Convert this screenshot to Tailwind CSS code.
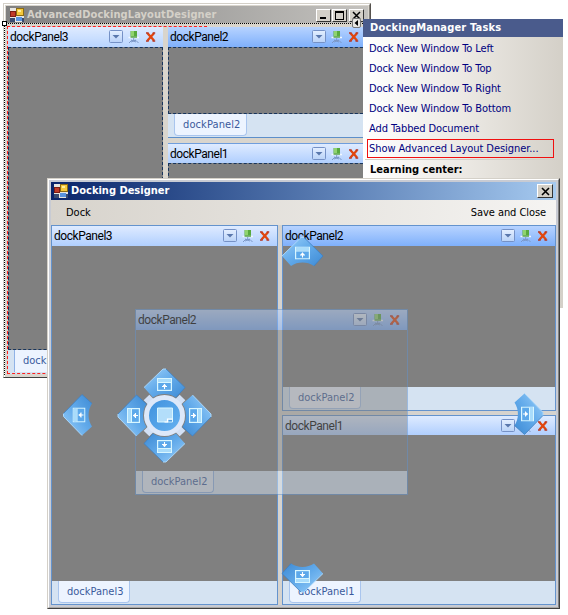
<!DOCTYPE html>
<html lang="en">
<head>
<meta charset="utf-8">
<title>Docking Designer</title>
<script src="https://cdn.jsdelivr.net/npm/@tailwindcss/browser@4"></script>
</head>
<body class="bg-white">
<svg class="absolute w-0 h-0" aria-hidden="true">
  <defs>
    <linearGradient id="blue" x1="0" y1="0" x2="1" y2="1"><stop offset="0" stop-color="#9bd0fa"/><stop offset=".5" stop-color="#62aaea"/><stop offset="1" stop-color="#3d8ad4"/></linearGradient>
    <linearGradient id="disc" x1="0" y1="0" x2="1" y2="1"><stop offset="0" stop-color="#3d8fdc"/><stop offset="1" stop-color="#68b4f2"/></linearGradient>
    <linearGradient id="btn" x1="0" y1="0" x2="0" y2="1"><stop offset="0" stop-color="#e4efff"/><stop offset="1" stop-color="#b9d2f8"/></linearGradient>
    <symbol id="app" viewBox="0 0 14 14"><rect width="14" height="14" fill="#e8e6e0"/><rect x=".5" y="3.500" width="5" height="5" fill="#c03a28" stroke="#7c1d14"/><rect x="6.500" y=".5" width="7" height="7" fill="#f5c83c" stroke="#8c6c14"/><rect x="8" y="2" width="3" height="2" fill="#ffef9c"/><rect x="0" y="10" width="5" height="4" fill="#394a70"/><rect x="6" y="9" width="6" height="4" fill="#5a94e0"/><rect x="12" y="10" width="2" height="4" fill="#394a70"/></symbol>
    <symbol id="caption" viewBox="0 0 48 16"><rect x=".5" y="1.500" width="13" height="12" rx="1" fill="url(#btn)" stroke="#7591c6"/><path d="M3.500 6h7L7 9.500z" fill="#5a78ad"/><path d="M21.500 2h6.500v6h-6.500z" fill="#58aa3e"/><path d="M22 2h3v5h-3z" fill="#8fd36f"/><path d="M19.500 8.500h10.500" stroke="#f2f8ff" stroke-width="1.500"/><path d="M21.500 8.200h6.500" stroke="#4a9a3c"/><path d="M24.700 9v2M20 14l2.500-2.500h4.500l2.500 2.500M22 11l5 2M27 11l-5 2" stroke="#7c98c8" fill="none"/><path d="M38.500 4.200l6.500 7.300M45 4.200l-6.500 7.300" stroke="#e0460f" stroke-width="2.300"/><path d="M37 4h2.500M43.700 4h2.500M37 12h2.700M43.500 12h2.700" stroke="#b8321c" stroke-width="1.400"/></symbol>
    <symbol id="wedge" viewBox="-24 -48 48 34"><path d="M-1.500-46.500h3L20.500-28 11.500-18A21 21 0 0 0-11.500-18L-20.500-28z" fill="url(#blue)"/><path d="M-20.500-28-1.500-46.500h3" fill="none" stroke="#a9d6fa" stroke-width="1"/><path d="M1.500-46.500 20.500-28l-9 10" fill="none" stroke="#3f80c2" stroke-width=".8"/></symbol>
    <symbol id="glyph" viewBox="0 0 15 13"><rect x=".6" y=".6" width="13.800" height="11.800" fill="#5ca8ea" stroke="#d8f6ff" stroke-width="1.200"/><path d="M1 1h13v3H1z" fill="#a9dcfb"/><path d="M1 4.500h13" stroke="#d8f6ff"/><path d="M7.500 6v5M5 8.500h5M6.200 8.200l1.300-1.500 1.300 1.500" stroke="#fff" stroke-width="1.100" fill="none"/></symbol>
    <g id="dock"><use href="#wedge" x="-24" y="-48" width="48" height="34"/><use href="#glyph" x="-7.500" y="-37.500" width="15" height="13"/></g>
  </defs>
</svg>
<main class="relative w-[568px] h-[615px] overflow-hidden bg-white text-[11px] font-['DejaVu_Sans_Condensed','DejaVu_Sans',sans-serif]">

  <!-- Form being designed -->
  <section class="absolute left-[3px] top-[3px] w-[368px] h-[375px] bg-[#d9d5cd] border border-[#d4d0c8] border-r-[#55524e] border-b-[#404040]">
    <div class="w-full h-full border-t border-l border-white border-r border-r-[#85827c] p-px flex flex-col">
      <div class="h-[17px] shrink-0 flex items-center pl-[4px] pr-[4px] bg-linear-to-r from-[#808080] to-[#c4c2be]">
        <svg class="w-[14px] h-[14px] mr-[3px]"><use href="#app"/></svg>
        <span class="grow whitespace-nowrap font-bold text-[#d4d0c8] leading-[17px] tracking-[0.08px]">AdvancedDockingLayoutDesigner</span>
        <div class="flex gap-px mt-[2px]">
          <div class="w-[15px] h-[13px] bg-[#d4d0c8] border border-white border-r-[#333] border-b-[#333] flex items-end pl-[3px] pb-[2px]"><i class="w-[6px] h-[2px] bg-black"></i></div>
          <div class="w-[15px] h-[13px] bg-[#d4d0c8] border border-white border-r-[#333] border-b-[#333] flex items-center justify-center"><i class="w-[9px] h-[9px] border border-black border-t-2"></i></div>
          <div class="w-[15px] h-[13px] ml-px bg-[#d4d0c8] border border-white border-r-[#333] border-b-[#333] flex items-center justify-center"><svg class="w-[9px] h-[9px]" viewBox="0 0 9 9"><path d="M1 1l7 7M8 1L1 8" stroke="#000" stroke-width="1.500"/></svg></div>
        </div>
      </div>
      <div class="grow flex gap-[5px] pl-[2px] pt-[4px] pb-[2px] min-h-0">
        <div class="w-[155px] shrink-0 flex flex-col">
          <div class="h-[20px] flex items-center justify-between pl-[2px] pr-[6px] bg-linear-to-b from-[#dfebff] to-[#b9d5ff]">
            <span class="font-[Roboto] text-[12px] tracking-[-0.45px]">dockPanel3</span><svg class="w-[48px] h-[16px]"><use href="#caption"/></svg>
          </div>
          <div class="grow bg-[#808080] border border-dashed border-[#17345c]"></div>
          <div class="h-[24px] bg-[#d5e3f2] flex pl-[6px] pb-[2px]"><div class="border-l border-[#8fb2e6] bg-[#edf4ff] pl-[8px] pr-[7px] leading-[22px] text-[#3b5a9c]">dockPanel3</div></div>
        </div>
        <div class="grow flex flex-col">
          <div class="h-[20px] flex items-center justify-between pl-[2px] pr-0 bg-linear-to-b from-[#b7d3ff] to-[#7fb0fb]">
            <span class="font-[Roboto] text-[12px] tracking-[-0.45px]">dockPanel2</span><svg class="w-[48px] h-[16px] mr-[8px]"><use href="#caption"/></svg>
          </div>
          <div class="h-[67px] bg-[#808080] border border-dashed border-[#17345c]"></div>
          <div class="h-[24px] bg-[#d5e3f2] border-b border-[#5d8fca] flex pl-[6px] pb-[1px]"><div class="border-x border-b rounded-b-sm border-[#a9c5ee] bg-[#edf4ff] pl-[8px] pr-[6px] leading-[22px] text-[#3b5a9c] tracking-[0.1px]">dockPanel2</div></div>
          <div class="h-[20px] mt-[5px] flex items-center justify-between pl-[2px] pr-0 border-t border-[#6f9edd] bg-linear-to-b from-[#dfebff] to-[#b0cffe]">
            <span class="font-[Roboto] text-[12px] tracking-[-0.45px]">dockPanel1</span><svg class="w-[48px] h-[16px] mr-[8px]"><use href="#caption"/></svg>
          </div>
          <div class="grow bg-[#808080] border border-dashed border-[#17345c]"></div>
        </div>
      </div>
    </div>
  </section>
  <!-- Selection marks over the form -->
  <div class="absolute left-[4px] top-[23px] w-[363px] h-[352px] border border-dotted border-black border-r-0 border-b-0"></div>
  <div class="absolute left-[7px] top-[26px] w-[200px] h-[348px] border border-dashed border-[#ff2020] border-r-0"></div>
  <div class="absolute left-[2px] top-[21px] w-[5px] h-[5px] bg-white border border-black"></div>

  <!-- Smart tag task list -->
  <section class="absolute left-[363px] top-[19px] w-[200px] h-[289px] bg-linear-to-r from-white via-[#ece9e4] to-[#d4d0c8] flex flex-col text-[#000080]">
    <h2 class="h-[18px] shrink-0 bg-[#4a5b8c] text-white font-bold leading-[18px] pl-[7px] whitespace-nowrap tracking-[0.18px]">DockingManager Tasks</h2>
    <div class="flex flex-col pt-[2px] pl-[6px] leading-[20px] whitespace-nowrap tracking-[-0.1px]">
      <a>Dock New Window To Left</a><a>Dock New Window To Top</a><a>Dock New Window To Right</a><a>Dock New Window To Bottom</a><a>Add Tabbed Document</a>
      <a class="ml-[-2px] w-[187px] h-[19px] border border-[#f01010] pl-px leading-[17px] tracking-[-0.06px]">Show Advanced Layout Designer...</a>
    </div>
    <div class="mt-px mx-[2px] border-t border-[#d4d0c8] h-px"></div>
    <h3 class="pl-[7px] text-black font-bold leading-[20px]">Learning center:</h3>
  </section>
  <div class="absolute left-[559px] top-[263px] w-px h-[19px] bg-[#777]"></div>
  <div class="absolute left-[352px] top-[18px] w-[9px] h-[10px] rounded-xs bg-[#e9e7e3] border border-[#777]"><svg class="w-full h-full" viewBox="0 0 7 8"><path d="M5 1v6L1.500 4z"/></svg></div>

  <!-- Docking Designer dialog -->
  <section class="absolute left-[47px] top-[178px] w-[513px] h-[431px] bg-[#d4d0c8] border border-[#d4d0c8] border-r-[#404040] border-b-[#404040]">
    <div class="w-full h-full border border-white border-r-[#808080] border-b-[#aaa9a6] p-[2px] bg-[#c8cbd3] flex flex-col">
      <div class="h-[18px] shrink-0 flex items-center pl-[3px] pr-[3px] bg-linear-to-r from-[#0a246a] to-[#a6caf0]">
        <svg class="w-[14px] h-[14px] mr-[3px]"><use href="#app"/></svg>
        <span class="grow font-bold text-white leading-[18px]">Docking Designer</span>
        <div class="w-[16px] h-[14px] bg-[#d4d0c8] border border-white border-r-[#333] border-b-[#333] flex items-center justify-center"><svg class="w-[9px] h-[9px]" viewBox="0 0 9 9"><path d="M1 1l7 7M8 1L1 8" stroke="#000" stroke-width="1.600"/></svg></div>
      </div>
      <div class="h-[25px] shrink-0 flex items-center justify-between pl-[15px] pr-[10px] pt-[2px] bg-linear-to-r from-[#d7d3cc] to-[#f5f4f2]"><span>Dock</span><span class="tracking-[-0.07px]">Save and Close</span></div>
      <div class="grow flex gap-[4px] min-h-0 bg-[#d6d3ce]">
        <div class="w-[227px] shrink-0 flex flex-col border border-[#6493cd]">
          <div class="h-[20px] shrink-0 flex items-center justify-between pl-[2px] pr-[6px] bg-linear-to-b from-[#dfebff] to-[#b0cffe]"><span class="font-[Roboto] text-[12px] tracking-[-0.45px]">dockPanel3</span><svg class="w-[48px] h-[16px]"><use href="#caption"/></svg></div>
          <div class="grow bg-[#808080]"></div>
          <div class="h-[23px] shrink-0 bg-[#d5e3f2] flex pl-[6px] pb-[1px]"><div class="border-x border-b rounded-b-sm border-[#a9c5ee] bg-[#edf4ff] pl-[8px] pr-[6px] leading-[21px] text-[#3b5a9c]">dockPanel3</div></div>
        </div>
        <div class="grow flex flex-col gap-[4px]">
          <div class="h-[186px] shrink-0 flex flex-col border border-[#6493cd]">
            <div class="h-[20px] shrink-0 flex items-center justify-between pl-[2px] pr-[6px] bg-linear-to-b from-[#b7d3ff] to-[#7fb0fb]"><span class="font-[Roboto] text-[12px] tracking-[-0.45px]">dockPanel2</span><svg class="w-[48px] h-[16px]"><use href="#caption"/></svg></div>
            <div class="grow bg-[#808080]"></div>
            <div class="h-[23px] shrink-0 bg-[#d5e3f2] flex pl-[6px] pb-[1px]"><div class="border-x border-b rounded-b-sm border-[#a9c5ee] bg-[#edf4ff] pl-[8px] pr-[6px] leading-[21px] text-[#3b5a9c]">dockPanel2</div></div>
          </div>
          <div class="grow flex flex-col border border-[#6493cd]">
            <div class="h-[19px] shrink-0 flex items-center justify-between pl-[2px] pr-[6px] bg-linear-to-b from-[#dfebff] to-[#b0cffe]"><span class="font-[Roboto] text-[12px] tracking-[-0.45px]">dockPanel1</span><svg class="w-[48px] h-[16px]"><use href="#caption"/></svg></div>
            <div class="grow bg-[#808080]"></div>
            <div class="h-[23px] shrink-0 bg-[#d5e3f2] flex pl-[6px] pb-[1px]"><div class="border-x border-b rounded-b-sm border-[#a9c5ee] bg-[#edf4ff] pl-[8px] pr-[6px] leading-[21px] text-[#3b5a9c]">dockPanel1</div></div>
          </div>
        </div>
      </div>
    </div>
  </section>

  <!-- Panel being dragged -->
  <section class="absolute left-[135px] top-[309px] w-[273px] h-[186px] opacity-50 flex flex-col border border-[#6493cd]">
    <div class="h-[20px] shrink-0 flex items-center justify-between pl-[2px] pr-[6px] bg-linear-to-b from-[#b7d3ff] to-[#7fb0fb]"><span class="font-[Roboto] text-[12px] tracking-[-0.45px]">dockPanel2</span><svg class="w-[48px] h-[16px]"><use href="#caption"/></svg></div>
    <div class="grow bg-[#808080]"></div>
    <div class="h-[23px] shrink-0 bg-[#d5e3f2] flex pl-[6px] pb-[1px]"><div class="border-x border-b rounded-b-sm border-[#8fb2e6] bg-[#e1ebf8] pl-[8px] pr-[6px] leading-[21px] text-[#3b5a9c]">dockPanel2</div></div>
  </section>

  <!-- Dock guides -->
  <svg class="absolute left-0 top-0 w-[568px] h-[615px]" viewBox="0 0 568 615">
    <use href="#dock" transform="translate(302.500 284)"/>
    <use href="#dock" transform="translate(302.500 545.500) rotate(180)"/>
    <use href="#dock" transform="translate(110 415) rotate(-90)"/>
    <use href="#dock" transform="translate(496.500 414) rotate(90)"/>
    <g transform="translate(164.500 415.500)">
      <path d="M-18-18 18 18M18-18-18 18" stroke="#d3e0f4" stroke-width="8"/>
      <use href="#dock"/><use href="#dock" transform="rotate(90)"/><use href="#dock" transform="rotate(180)"/><use href="#dock" transform="rotate(-90)"/>
      <circle r="18" fill="url(#disc)" stroke="#dde8f9" stroke-width="5"/>
      <path d="M-7-7.500H8V6.500H-7z" fill="#b3defa" stroke="#d8f6ff"/><path d="M8 3.500H3v3h-3" fill="none" stroke="#fff" stroke-width="1.200"/><path d="M4 4.500h3.500v1.500H4z" fill="#4f9be0"/>
    </g>
  </svg>
</main>
</body>
</html>
